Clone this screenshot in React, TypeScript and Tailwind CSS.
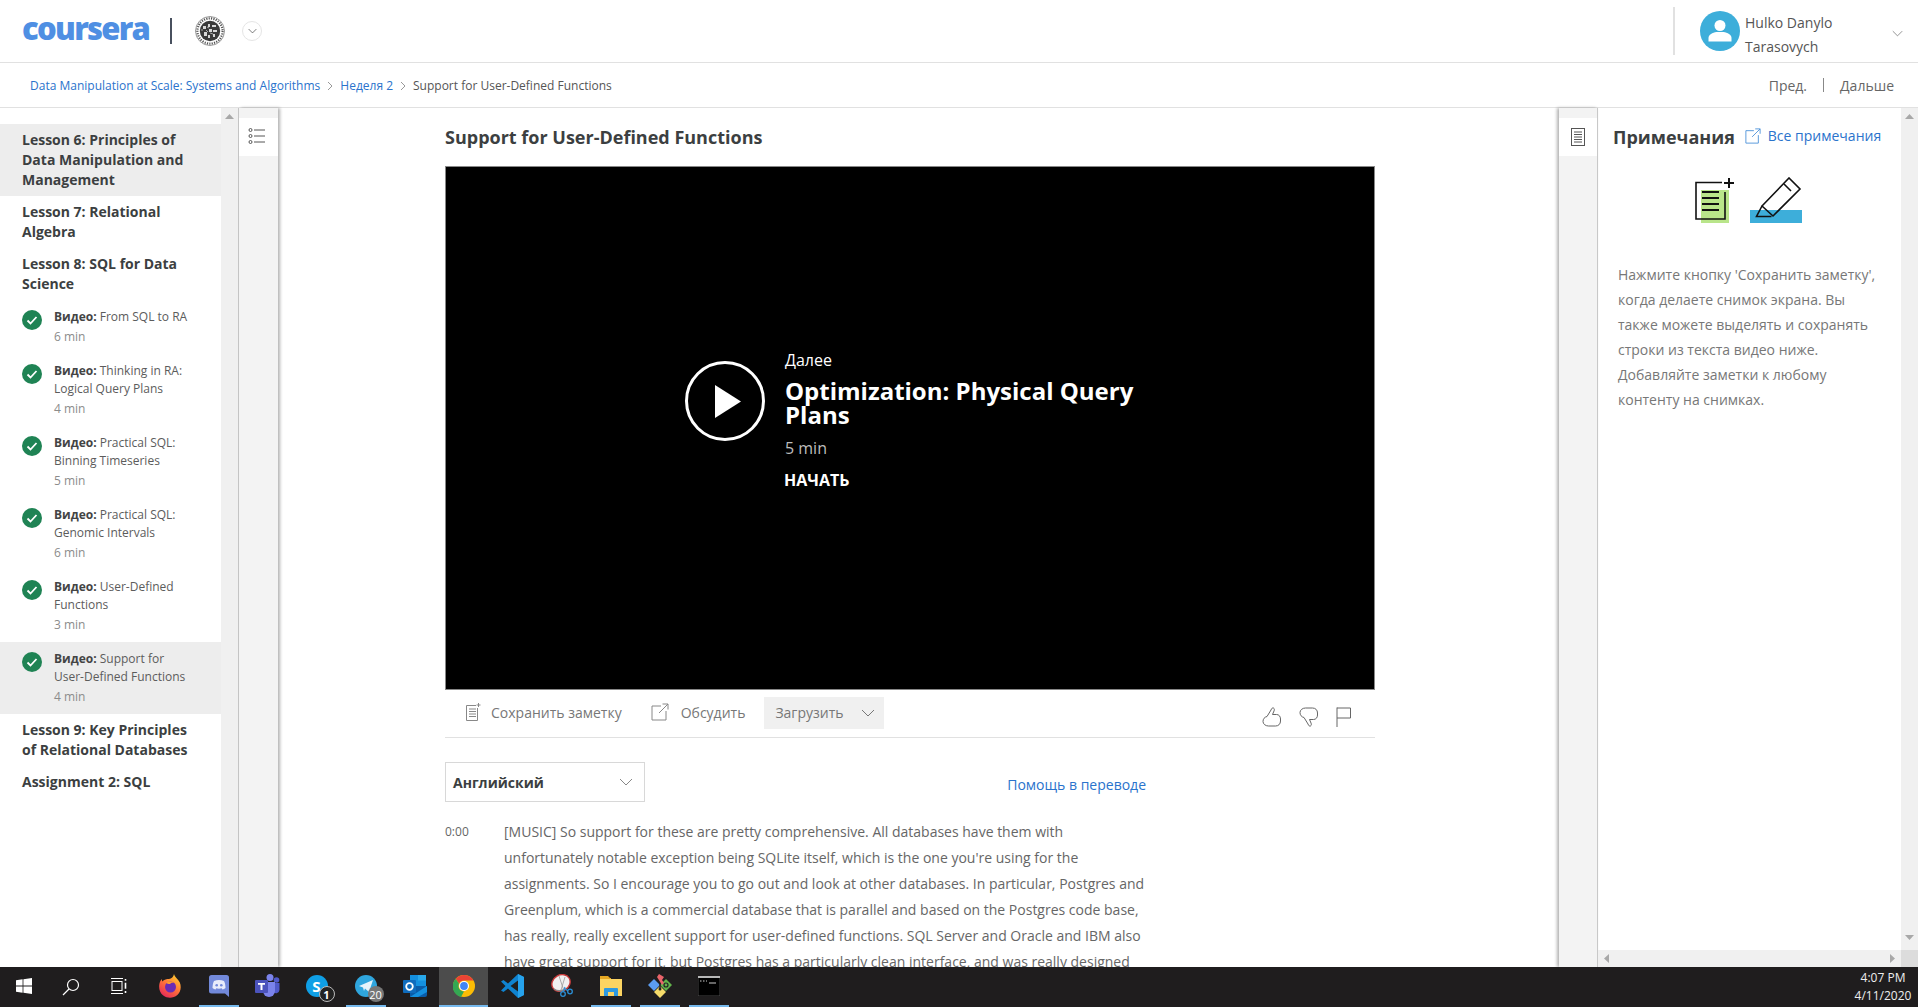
import React from "react";

const Chevron = ({ className = "", color = "#666", w = 14, h = 8 }: { className?: string; color?: string; w?: number; h?: number }) => (
  <svg width={w} height={h} viewBox="0 0 14 8" className={className} fill="none" stroke={color} strokeWidth="1">
    <path d="M1 1l6 6 6-6" />
  </svg>
);

const Crumb = () => (
  <svg width="6" height="10" viewBox="0 0 6 10" fill="none" stroke="#999" strokeWidth="1" className="mx-[7px]">
    <path d="M1 1l4 4-4 4" />
  </svg>
);

const Check = () => (
  <svg width="20" height="20" viewBox="0 0 20 20" className="shrink-0">
    <circle cx="10" cy="10" r="10" fill="#1f8354" />
    <path d="M5.5 10.5l3 3 6-6.5" fill="none" stroke="#fff" strokeWidth="1.8" />
  </svg>
);

const Seal = () => (
  <svg width="30" height="30" viewBox="0 0 30 30">
    <circle cx="15" cy="15" r="14.5" fill="#fff" stroke="#999" strokeWidth="1" />
    <circle cx="15" cy="15" r="12.6" fill="none" stroke="#555" strokeWidth="2.2" strokeDasharray="1.2 1.2" />
    <circle cx="15" cy="15" r="10.2" fill="#3a3a3a" />
    <path d="M8 10h3v3H8zM13 8h2v3h-2zM17 9h4v2h-4zM9 16h3v4H9zM14 13h3v3h-3zM18 14h4v2h-4zM13 19h2v3h-2zM18 18h2v3h-2z" fill="#d8d8d8" />
    <path d="M6 14h2M11 14l2 2M15 17l3 1M12 11l2 1" stroke="#aaa" strokeWidth="1" fill="none" />
  </svg>
);

const Video = ({ text, sub, min, active }: { text: string; sub?: string; min: string; active?: boolean }) => (
  <div className={`flex pl-[22px] pt-2 pb-2 gap-[12px] ${active ? "bg-[#ededed]" : ""}`}>
    <div className="pt-[2px]">
      <Check />
    </div>
    <div className="w-[160px] text-[12px] leading-[18px] text-[#5c5c5c]">
      <div>
        <span className="font-bold text-[#444]">Видео:</span> {text}
        {sub ? (
          <>
            <br />
            {sub}
          </>
        ) : null}
      </div>
      <div className="mt-[2px] text-[#8c8c8c]">{min}</div>
    </div>
  </div>
);

const Lesson = ({ children, active }: { children: React.ReactNode; active?: boolean }) => (
  <div className={`pl-[22px] pr-2 py-[6px] text-[14px] leading-[20px] font-bold text-[#3c3f41] ${active ? "bg-[#ededed]" : ""}`}>
    {children}
  </div>
);

const Tri = ({ dir }: { dir: "up" | "down" | "left" | "right" }) => {
  const p = { up: "M0 5L4.5 0L9 5Z", down: "M0 0L4.5 5L9 0Z", left: "M7 0V9L2 4.5Z", right: "M2 0V9L7 4.5Z" }[dir];
  return (
    <svg width="9" height="9" viewBox="0 0 9 9">
      <path d={p} fill="#a8a8a8" />
    </svg>
  );
};

const ListIcon = () => (
  <svg width="18" height="16" viewBox="0 0 18 16" fill="none" stroke="#555" strokeWidth="1">
    <circle cx="2.5" cy="2" r="1.5" />
    <circle cx="2.5" cy="8" r="1.5" />
    <circle cx="2.5" cy="14" r="1.5" />
    <path d="M6 2h11M6 8h11M6 14h11" />
  </svg>
);

const NoteIcon = () => (
  <svg width="14" height="18" viewBox="0 0 14 18" fill="none" stroke="#555" strokeWidth="1">
    <rect x="0.5" y="0.5" width="13" height="17" />
    <path d="M3 4h8M3 6.5h8M3 9h8M3 11.5h8M3 14h8" />
  </svg>
);

const SaveNote = () => (
  <svg width="16" height="18" viewBox="0 0 16 18" fill="none" stroke="#888" strokeWidth="1">
    <path d="M11 2.5H1.5v15h11V5" />
    <path d="M4 6h7M4 8.5h7M4 11h7M4 13.5h7" />
    <path d="M13.5 0v4M11.5 2h4" />
  </svg>
);

const ExtLink = ({ color = "#888", size = 18 }: { color?: string; size?: number }) => (
  <svg width={size} height={size} viewBox="0 0 18 18" fill="none" stroke={color} strokeWidth="1">
    <path d="M10 3H1v14h14V8" />
    <path d="M8 10L17 1M11.5 1H17v5.5" />
  </svg>
);

const ThumbUp = ({ className = "" }: { className?: string }) => (
  <svg width="20" height="20" viewBox="0 0 20 20" fill="none" stroke="#666" strokeWidth="1" className={className}>
    <path d="M5 9.500L9 3C9.500 1.500 10.500 0.500 11.500 1C12.500 1.500 12.500 3 12 4L10.500 7.500H14.500C17 7.500 18.500 9.500 18.500 12V14C18.500 17 16.500 19 13.500 19H6.500C3.500 19 1 17 1 14.500C1 12 2.500 10 5 9.500Z" />
  </svg>
);

const Flag = () => (
  <svg width="15" height="20" viewBox="0 0 15 20" fill="none" stroke="#666" strokeWidth="1">
    <path d="M1 0.5V20M1 1h13.5v10H1" />
  </svg>
);

const Windows = () => (
  <svg width="16" height="16" viewBox="0 0 16 16" fill="#fff">
    <path d="M0 2.2l6.6-.9v6.3H0zM7.4 1.2L16 0v7.6H7.4zM0 8.4h6.6v6.3L0 13.8zM7.4 8.4H16V16l-8.6-1.2z" />
  </svg>
);

const Search = () => (
  <svg width="18" height="18" viewBox="0 0 18 18" fill="none" stroke="#fff" strokeWidth="1.2">
    <circle cx="11" cy="7" r="5.5" />
    <path d="M7 11l-6 6" />
  </svg>
);

const TaskView = () => (
  <svg width="16" height="16" viewBox="0 0 16 16" fill="none" stroke="#fff" strokeWidth="1">
    <path d="M0 .5h12M0 15.5h12" />
    <rect x="1" y="3.5" width="10" height="9" />
    <path d="M14.5 1v1.8M14.5 4.8v6M14.5 13v2" strokeWidth="1.6" />
  </svg>
);

const Firefox = () => (
  <svg width="24" height="24" viewBox="0 0 24 24">
    <defs>
      <linearGradient id="ff" x1="0.8" y1="0" x2="0.2" y2="1">
        <stop offset="0" stopColor="#ffd02e" />
        <stop offset="0.5" stopColor="#ff7139" />
        <stop offset="1" stopColor="#e3245c" />
      </linearGradient>
    </defs>
    <path d="M16 0c.5 3 4 5 5.800 8.500 2 5 .5 10-2.500 12.500-4 3.500-10 3.500-14 .5C1.500 18.500.5 14 1.500 9.500 2 7.500 3 5.500 4 5c-.2 1 0 2 .3 2.500C6 5.500 9 5 11 5 13.500 4.500 15.500 3 16 0z" fill="url(#ff)" />
    <circle cx="12.500" cy="13" r="5.500" fill="#6a2bb5" />
    <path d="M8 9c2-2 6-2 8 0-2-.5-3 0-4 1-2 0-3-.5-4-1z" fill="#ff9a2e" />
  </svg>
);

const Discord = () => (
  <svg width="20" height="22" viewBox="0 0 20 22">
    <path d="M2.500 0h15A2.500 2.500 0 0 1 20 2.500V22l-4-3.500H2.500A2.500 2.500 0 0 1 0 16V2.500A2.500 2.500 0 0 1 2.500 0z" fill="#7289da" />
    <path d="M5 6c3-1.500 7-1.500 10 0 1 2 1.500 4.500 1.500 7-1 .8-2 1.200-3 1.500l-.8-1.200c-1.800.5-3.600.5-5.400 0l-.8 1.200c-1-.3-2-.7-3-1.500C3.500 10.500 4 8 5 6z" fill="#e8ecfa" />
    <circle cx="7.700" cy="10.300" r="1.300" fill="#7289da" />
    <circle cx="12.300" cy="10.300" r="1.300" fill="#7289da" />
  </svg>
);

const Teams = () => (
  <svg width="25" height="24" viewBox="0 0 25 24">
    <circle cx="15" cy="3.500" r="3.500" fill="#7b83eb" />
    <circle cx="21.500" cy="6" r="2.800" fill="#5059c9" />
    <path d="M18 9h6.500v7a3.500 3.500 0 0 1-6.500 1.500z" fill="#5059c9" />
    <path d="M8 8h12v9a6 6 0 0 1-12 0z" fill="#7b83eb" />
    <rect x="0" y="6" width="13" height="13" rx="1" fill="#4b53bc" />
    <path d="M3 9h7v1.800H7.500V16H5.500v-5.200H3z" fill="#fff" />
  </svg>
);

const Badge = ({ n, filled }: { n: string; filled?: boolean }) => (
  <span className={`absolute right-[-7px] bottom-[-5px] flex h-4 min-w-4 items-center justify-center rounded-full text-[11px] leading-none text-white ${filled ? "bg-[#777] px-[1px]" : "bg-[#222] border border-[#bbb]"}`}>
    {n}
  </span>
);

const Skype = () => (
  <span className="relative flex h-[22px] w-[22px] items-center justify-center rounded-full bg-[#0f9fe6] text-[15px] font-bold leading-none text-white">
    S
    <Badge n="1" />
  </span>
);

const Telegram = () => (
  <span className="relative flex h-[22px] w-[22px] items-center justify-center rounded-full bg-[#2fa6de]">
    <svg width="14" height="12" viewBox="0 0 14 12">
      <path d="M0 6L14 0L10 12L6 8.500L5 11L4 7.500Z" fill="#e6f4fb" />
    </svg>
    <Badge n="20" filled />
  </span>
);

const Outlook = () => (
  <svg width="24" height="22" viewBox="0 0 24 22">
    <rect x="7" y="0" width="16" height="11" fill="#1490df" />
    <rect x="15" y="0" width="8" height="5.500" fill="#28a8ea" />
    <path d="M7 11h17v9a2 2 0 0 1-2 2H7z" fill="#0a5ca8" />
    <path d="M7 22l17-11v6l-9 5z" fill="#1490df" />
    <rect x="0" y="5" width="13" height="13" rx="1" fill="#0f6cbd" />
    <circle cx="6.500" cy="11.500" r="3.300" fill="none" stroke="#fff" strokeWidth="1.800" />
  </svg>
);

const Chrome = () => (
  <svg width="22" height="22" viewBox="0 0 22 22">
    <circle cx="11" cy="11" r="11" fill="#fbbc05" />
    <path d="M11 0a11 11 0 0 1 9.500 5.500H11a5.500 5.500 0 0 0-5 3.200L2.700 3.800A11 11 0 0 1 11 0z" fill="#ea4335" />
    <path d="M2.700 3.800L6 8.700a5.500 5.500 0 0 0 5 7.800L8 22A11 11 0 0 1 2.700 3.800z" fill="#34a853" />
    <circle cx="11" cy="11" r="5" fill="#fff" />
    <circle cx="11" cy="11" r="3.900" fill="#4285f4" />
  </svg>
);

const VSCode = () => (
  <svg width="24" height="24" viewBox="0 0 24 24">
    <path d="M17 0l6 3v18l-6 3-10-9.500L2.500 18 0 16.500 4.500 12 0 7.500 2.500 6 7 9.500z" fill="#0f83d0" />
    <path d="M17 6.500L9.500 12l7.500 5.500z" fill="#1f1f1f" />
    <path d="M17 0l6 3v18l-6 3z" fill="#26a2ec" />
  </svg>
);

const Snip = () => (
  <svg width="24" height="24" viewBox="0 0 24 24">
    <ellipse cx="11" cy="9" rx="9.500" ry="8" fill="#f0f0f0" stroke="#c93a3a" strokeWidth="1.400" transform="rotate(-30 11 9)" />
    <path d="M4 15c3 2 6 2 9 1" stroke="#888" strokeWidth="1.500" fill="none" />
    <path d="M9 2l5 15M15 3l-4 13" stroke="#999" strokeWidth="0.800" />
    <circle cx="13" cy="20" r="2.300" fill="none" stroke="#2b8fd6" strokeWidth="1.300" />
    <circle cx="20" cy="17.500" r="2.300" fill="none" stroke="#2b8fd6" strokeWidth="1.300" />
    <path d="M13 18l2-5M18 17l-4-3" stroke="#2b8fd6" strokeWidth="1.200" />
  </svg>
);

const Explorer = () => (
  <svg width="22" height="22" viewBox="0 0 22 22">
    <path d="M0 1h8l2 2h1v5H0z" fill="#e6a823" />
    <rect x="0" y="4" width="22" height="17" fill="#fcd462" />
    <path d="M4 21v-7a1 1 0 0 1 1-1h12a1 1 0 0 1 1 1v7h-4v-4H8v4z" fill="#2f9ae0" />
  </svg>
);

const GitKraken = () => (
  <svg width="24" height="24" viewBox="0 0 24 24">
    <path d="M6 6l6 6-6 6-6-6z" fill="#5b9cf0" transform="translate(0 -1)" />
    <path d="M18 6l6 6-6 6-6-6z" fill="#62b34b" transform="translate(0 -1)" />
    <path d="M12 12l6 6-6 6-6-6z" fill="#f6dc6a" />
    <path d="M9 3l2-3 5 3-2 3 2 3-2 2z" fill="#e9646a" />
    <circle cx="12" cy="15" r="1.500" fill="#222" />
    <path d="M12 10v5" stroke="#222" strokeWidth="1.500" />
    <circle cx="18" cy="11" r="2" fill="none" stroke="#222" strokeWidth="1.200" />
  </svg>
);

const Cmd = () => (
  <svg width="22" height="20" viewBox="0 0 22 20">
    <rect x="0" y="0" width="22" height="20" fill="#000" stroke="#888" strokeWidth="0.500" />
    <rect x="0" y="0" width="22" height="2" fill="#b8b8b8" />
    <path d="M2 5h1.500M5 5h1.500M8 5h1M11 7h7" stroke="#ccc" strokeWidth="1" />
  </svg>
);

const TaskItem = ({ children, open, active }: { children: React.ReactNode; open?: boolean; active?: boolean }) => (
  <div className={`flex h-10 w-[49px] flex-col items-center ${active ? "bg-[#4c4c4c]" : ""}`}>
    <div className="flex h-[38px] items-center justify-center">{children}</div>
    <div className={`h-[2px] ${active ? "w-full" : "w-[40px]"} ${open ? "bg-[#76b9ed]" : ""}`} />
  </div>
);

export default function App() {
  return (
    <div className="flex h-[1007px] w-[1918px] flex-col overflow-hidden bg-white font-['Open_Sans',sans-serif] text-[#373a3c]">
      {/* top bar */}
      <header className="flex h-[63px] shrink-0 items-center border-b border-[#e1e1e1] pl-[22px]">
        <span className="w-[127px] text-[31px] font-extrabold leading-none tracking-[-1.7px] text-[#4f8fe3] pb-[6px]">coursera</span>
        <div className="ml-[21px] h-[26px] w-[2px] bg-[#48505e]" />
        <div className="ml-[23px]">
          <Seal />
        </div>
        <div className="ml-[17px] flex h-5 w-5 items-center justify-center rounded-full border border-[#e5e5e5]">
          <Chevron w={9} h={6} color="#333" />
        </div>
        <div className="ml-auto flex h-[48px] w-[245px] items-center border-l-2 border-[#e1e1e1] pl-[25px]">
          <div className="flex h-10 w-10 shrink-0 items-center justify-center rounded-full bg-[#3daeda]">
            <svg width="26" height="26" viewBox="0 0 26 26" fill="#fff">
              <circle cx="13" cy="7.500" r="5.500" />
              <path d="M1.500 20c0-3.500 4-5.500 8-6h7c4 .5 8 2.500 8 6v3.500h-23z" />
            </svg>
          </div>
          <div className="ml-[5px] mt-[7px] text-[14px] leading-[24px] text-[#555]">
            Hulko Danylo
            <br />
            Tarasovych
          </div>
          <Chevron className="ml-auto mr-[15px] mt-[5px]" w={11} h={7} color="#777" />
        </div>
      </header>

      {/* breadcrumb */}
      <div className="flex h-[45px] shrink-0 items-center border-b border-[#e1e1e1] pl-[30px] pr-[24px] text-[12px]">
        <div className="mt-[2px] flex items-center">
          <a className="text-[#2a73cc]">Data Manipulation at Scale: Systems and Algorithms</a>
          <Crumb />
          <a className="text-[#2a73cc]">Неделя 2</a>
          <Crumb />
          <span className="text-[#555]">Support for User-Defined Functions</span>
        </div>
        <div className="ml-auto flex items-center text-[14px] text-[#666]">
          <span>Пред.</span>
          <div className="mx-[16px] h-[14px] w-px bg-[#888]" />
          <span>Дальше</span>
        </div>
      </div>

      {/* body */}
      <div className="flex min-h-0 flex-1">
        {/* lesson list */}
        <aside className="flex w-[221px] shrink-0 flex-col pt-[16px]">
          <Lesson active>
            Lesson 6: Principles of
            <br />
            Data Manipulation and
            <br />
            Management
          </Lesson>
          <Lesson>
            Lesson 7: Relational
            <br />
            Algebra
          </Lesson>
          <Lesson>
            Lesson 8: SQL for Data
            <br />
            Science
          </Lesson>
          <Video text="From SQL to RA" min="6 min" />
          <Video text="Thinking in RA:" sub="Logical Query Plans" min="4 min" />
          <Video text="Practical SQL:" sub="Binning Timeseries" min="5 min" />
          <Video text="Practical SQL:" sub="Genomic Intervals" min="6 min" />
          <Video text="User-Defined" sub="Functions" min="3 min" />
          <Video text="Support for" sub="User-Defined Functions" min="4 min" active />
          <Lesson>
            Lesson 9: Key Principles
            <br />
            of Relational Databases
          </Lesson>
          <Lesson>Assignment 2: SQL</Lesson>
        </aside>
        <div className="flex w-[18px] shrink-0 flex-col items-center border-r border-[#c8c8c8] bg-[#f0f0f0] pt-[6px] pr-px">
          <Tri dir="up" />
        </div>
        <div className="w-[39px] shrink-0 bg-[#f3f3f3] pt-[10px] shadow-[2px_0_3px_rgba(0,0,0,0.3)]">
          <div className="flex h-[38px] items-center justify-center bg-white pb-[2px] pr-[4px]">
            <ListIcon />
          </div>
        </div>

        {/* main */}
        <main className="min-w-0 flex-1 overflow-hidden pl-[167px] pt-[17px]">
          <h1 className="text-[18px] font-bold leading-[24px] text-[#3c3f41]">Support for User-Defined Functions</h1>
          <div className="mt-[17px] flex h-[524px] w-[930px] items-center border border-[#888] bg-black">
            <div className="ml-[239px] mt-[-54px] flex h-[80px] w-[80px] shrink-0 items-center justify-center rounded-full border-[3px] border-white">
              <svg width="26" height="33" viewBox="0 0 26 33" className="ml-[5px]">
                <path d="M0 0L26 16.500L0 33Z" fill="#fff" />
              </svg>
            </div>
            <div className="ml-[20px] mt-[-16px] w-[360px] text-white">
              <div className="text-[16px] leading-[20px]">Далее</div>
              <div className="mt-[9px] text-[24px] font-bold leading-[24px]">
                Optimization: Physical Query
                <br />
                Plans
              </div>
              <div className="mt-[9px] text-[16px] leading-[24px] text-[#bdbdbd]">5 min</div>
              <div className="ml-[-1px] mt-[10px] text-[16px] font-bold leading-[20px]">НАЧАТЬ</div>
            </div>
          </div>
          <div className="flex h-[48px] w-[930px] items-start border-b border-[#e1e1e1] text-[14px] text-[#777]">
            <div className="ml-[20px] mt-[6px] flex h-8 items-center">
              <SaveNote />
              <span className="ml-[10px]">Сохранить заметку</span>
            </div>
            <div className="ml-[29px] mt-[6px] flex h-8 items-center">
              <ExtLink />
              <span className="ml-[12px]">Обсудить</span>
            </div>
            <div className="ml-[19px] mt-[7px] flex h-8 w-[120px] items-center bg-[#f0f0f0] pl-[11px]">
              <span className="pb-[2px]">Загрузить</span>
              <Chevron className="ml-auto mr-[9px]" w={14} h={8} color="#777" />
            </div>
            <div className="ml-auto mt-[17px] flex items-center pr-[24px]">
              <ThumbUp />
              <ThumbUp className="ml-[17px] rotate-180 -scale-x-100" />
              <span className="ml-[17px]">
                <Flag />
              </span>
            </div>
          </div>
          <div className="mt-[24px] flex w-[701px] items-center justify-between">
            <div className="flex h-[40px] w-[200px] items-center border border-[#d8d8d8] pl-[7px] pr-[11px]">
              <span className="text-[14px] font-bold text-[#3c3f41]">Английский</span>
              <Chevron className="ml-auto" w={14} h={8} color="#888" />
            </div>
            <a className="mt-[4px] text-[14px] text-[#2a73cc]">Помощь в переводе</a>
          </div>
          <div className="mt-[17px] flex w-[701px] text-[#666]">
            <span className="w-[59px] shrink-0 text-[12px] leading-[26px]">0:00</span>
            <p className="text-[14px] leading-[26px] whitespace-nowrap">
              [MUSIC] So support for these are pretty comprehensive. All databases have them with
              <br />
              unfortunately notable exception being SQLite itself, which is the one you're using for the
              <br />
              assignments. So I encourage you to go out and look at other databases. In particular, Postgres and
              <br />
              Greenplum, which is a commercial database that is parallel and based on the Postgres code base,
              <br />
              has really, really excellent support for user-defined functions. SQL Server and Oracle and IBM also
              <br />
              have great support for it, but Postgres has a particularly clean interface, and was really designed
            </p>
          </div>
        </main>

        {/* notes */}
        <div className="w-[39px] shrink-0 border-r border-[#c8c8c8] bg-[#f3f3f3] pt-[10px] shadow-[-2px_0_3px_rgba(0,0,0,0.3)]">
          <div className="flex h-[38px] items-center justify-center bg-white">
            <NoteIcon />
          </div>
        </div>
        <section className="flex w-[320px] shrink-0 flex-col">
          <div className="flex min-h-0 flex-1">
            <div className="w-[303px] shrink-0 pl-[15px]">
              <div className="mt-[16px] flex h-[26px] items-center">
                <span className="text-[18px] font-bold leading-[26px] text-[#3c3f41]">Примечания</span>
                <span className="ml-[10px] mt-[-3px] flex items-center text-[14px] text-[#2a73cc]">
                  <ExtLink color="#4a90d9" size={16} />
                  <span className="ml-[7px]">Все примечания</span>
                </span>
              </div>
              <div className="mt-[27px] flex h-[46px] items-end pl-[82px]">
                <svg width="108" height="46" viewBox="0 0 108 46" fill="none" stroke="#111">
                  <rect x="6" y="13" width="28" height="33" fill="#b9e58a" stroke="none" />
                  <rect x="55" y="33" width="52" height="13" fill="#3daeda" stroke="none" />
                  <path d="M27 5.500H1V42H30V15" strokeWidth="1.600" />
                  <path d="M7 15h17M7 21h17M7 27h17M7 33h17" strokeWidth="2" />
                  <path d="M29 6h10M34 1v10" strokeWidth="2" />
                  <path d="M67 29L94 1l11 11-27 27z" strokeWidth="1.600" />
                  <path d="M67 29l-5.500 10.500h15" strokeWidth="1.600" />
                  <path d="M89 7l7 7" strokeWidth="1.600" />
                </svg>
              </div>
              <p className="mt-[39px] pl-[5px] text-[14px] leading-[25px] text-[#777] whitespace-nowrap">
                Нажмите кнопку 'Сохранить заметку',
                <br />
                когда делаете снимок экрана. Вы
                <br />
                также можете выделять и сохранять
                <br />
                строки из текста видео ниже.
                <br />
                Добавляйте заметки к любому
                <br />
                контенту на снимках.
              </p>
            </div>
            <div className="flex w-[17px] shrink-0 flex-col items-center justify-between bg-[#f0f0f0] py-[6px]">
              <Tri dir="up" />
              <Tri dir="down" />
            </div>
          </div>
          <div className="flex h-[17px] shrink-0">
            <div className="flex w-[303px] items-center justify-between bg-[#f0f0f0] px-[4px]">
              <Tri dir="left" />
              <Tri dir="right" />
            </div>
            <div className="w-[17px] bg-[#dcdcdc]" />
          </div>
        </section>
      </div>

      {/* taskbar */}
      <footer className="flex h-10 shrink-0 items-center bg-[#1f1d1e] text-white">
        <div className="flex w-[145px]">
          <div className="flex w-[47px] justify-center"><Windows /></div>
          <div className="flex w-[48px] justify-center"><Search /></div>
          <div className="flex w-[47px] justify-center"><TaskView /></div>
        </div>
        <TaskItem><Firefox /></TaskItem>
        <TaskItem open><Discord /></TaskItem>
        <TaskItem><Teams /></TaskItem>
        <TaskItem><Skype /></TaskItem>
        <TaskItem open><Telegram /></TaskItem>
        <TaskItem><Outlook /></TaskItem>
        <TaskItem open active><Chrome /></TaskItem>
        <TaskItem><VSCode /></TaskItem>
        <TaskItem><Snip /></TaskItem>
        <TaskItem open><Explorer /></TaskItem>
        <TaskItem open><GitKraken /></TaskItem>
        <TaskItem open><Cmd /></TaskItem>
        <div className="ml-auto w-[64px] pr-[6px] text-center text-[12px] leading-[18px] text-[#eee]">
          <div>4:07 PM</div>
          <div>4/11/2020</div>
        </div>
      </footer>
    </div>
  );
}
